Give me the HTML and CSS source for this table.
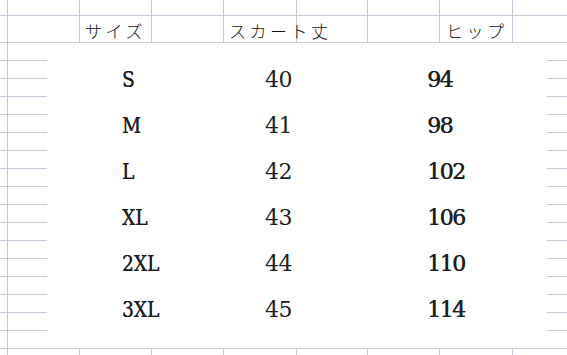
FILE: index.html
```html
<!DOCTYPE html>
<html lang="ja">
<head>
<meta charset="utf-8">
<title>サイズ表</title>
<link rel="stylesheet" href="styles.css">
</head>
<body>
<div class="sheet">
  <div class="grid head-top">
    <div class="cell"></div><div class="cell"></div><div class="cell"></div><div class="cell"></div><div class="cell"></div><div class="cell"></div><div class="cell"></div><div class="cell"></div><div class="cell"></div>
  </div>
  <div class="grid head">
    <div class="cell"></div>
    <div class="cell"></div>
    <div class="cell hd">サイズ</div>
    <div class="cell"></div>
    <div class="cell hd">スカート丈</div>
    <div class="cell"></div>
    <div class="cell"></div>
    <div class="cell hd hd-hip">ヒップ</div>
    <div class="cell"></div>
  </div>
  <div class="grid body">
    <div class="col"></div><div class="col"></div><div class="col"></div><div class="col"></div><div class="col"></div><div class="col"></div><div class="col"></div><div class="col"></div><div class="col"></div>
  </div>
  <div class="picture">
    <div class="table">
      <div class="v size"><span>S</span></div><div class="v len">40</div><div class="v hip">94</div>
      <div class="v size"><span>M</span></div><div class="v len">41</div><div class="v hip">98</div>
      <div class="v size"><span>L</span></div><div class="v len">42</div><div class="v hip">102</div>
      <div class="v size"><span>XL</span></div><div class="v len">43</div><div class="v hip">106</div>
      <div class="v size"><span>2XL</span></div><div class="v len">44</div><div class="v hip">110</div>
      <div class="v size"><span>3XL</span></div><div class="v len">45</div><div class="v hip">114</div>
    </div>
  </div>
</div>
</body>
</html>
```
FILE: styles.css
```css
html, body {
  margin: 0;
  padding: 0;
  background: #ffffff;
  overflow: hidden;
  width: 567px;
  height: 355px;
}

.sheet {
  position: relative;
  width: 585px;
  height: 355px;
}

.grid {
  display: grid;
  grid-template-columns: 8px 72px 72px 72px 73px 71px 72px 73px 72px;
}

.cell, .col {
  box-sizing: border-box;
  border-right: 1px solid #c9c9d9;
}

.head-top .cell {
  height: 16px;
  border-bottom: 1px solid #c9c9d9;
}

.head .cell {
  height: 27px;
  border-bottom: 1px solid #c9c9d9;
}

.hd {
  font-family: "Noto Sans CJK JP", sans-serif;
  font-weight: 300;
  font-size: 17px;
  letter-spacing: 3.5px;
  color: #111;
  line-height: 27px;
  padding-left: 5px;
  padding-top: 1px;
  white-space: nowrap;
}

.hd-hip {
  padding-left: 6px;
}

.body .col {
  height: 320px;
  background-image: repeating-linear-gradient(to bottom, transparent 0, transparent 17px, #c9c9d9 17px, #c9c9d9 18px);
}

.picture {
  position: absolute;
  left: 47px;
  top: 43px;
  width: 500px;
  height: 305px;
  background: #ffffff;
}

.table {
  display: grid;
  grid-template-columns: 143px 162px auto;
  grid-auto-rows: 46px;
  padding: 14px 0 0 75px;
}

.v {
  font-family: "DejaVu Serif", "Liberation Serif", serif;
  font-size: 22px;
  line-height: 46px;
  color: #1e1e1e;
  white-space: nowrap;
}

.size span {
  display: inline-block;
  transform: scaleX(0.84);
  transform-origin: left center;
  text-shadow: 0.4px 0 0 #1e1e1e;
}

.len {
  letter-spacing: -0.5px;
}

.hip {
  letter-spacing: -1.5px;
  text-shadow: 0.4px 0 0 #1e1e1e;
}
```
